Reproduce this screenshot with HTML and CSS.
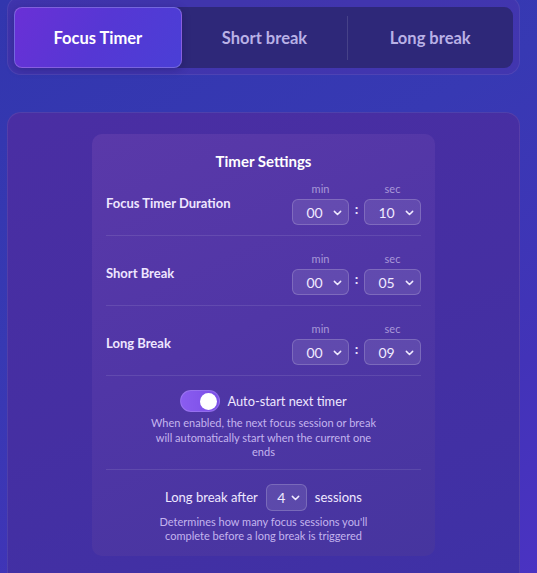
FILE: index.html
```html
<!DOCTYPE html>
<html lang="en">
<head>
<meta charset="utf-8">
<title>Timer Settings</title>
<link rel="stylesheet" href="styles.css">
</head>
<body>
<div class="page">
  <div class="tabs-wrap">
    <div class="tabs">
      <div class="tab active">Focus Timer</div>
      <div class="tab">Short break</div>
      <div class="tab divided">Long break</div>
    </div>
  </div>

  <div class="panel">
    <div class="card">
      <div class="card-title">Timer Settings</div>

      <div class="row first">
        <div class="row-label">Focus Timer Duration</div>
        <div class="time">
          <div class="unit">
            <div class="unit-label">min</div>
            <div class="select"><span class="val">00</span><svg class="chev" viewBox="0 0 10 6"><path d="M1.5 1.2 L5 4.6 L8.5 1.2"/></svg></div>
          </div>
          <div class="colon">:</div>
          <div class="unit">
            <div class="unit-label">sec</div>
            <div class="select"><span class="val">10</span><svg class="chev" viewBox="0 0 10 6"><path d="M1.5 1.2 L5 4.6 L8.5 1.2"/></svg></div>
          </div>
        </div>
      </div>

      <div class="row">
        <div class="row-label">Short Break</div>
        <div class="time">
          <div class="unit">
            <div class="unit-label">min</div>
            <div class="select"><span class="val">00</span><svg class="chev" viewBox="0 0 10 6"><path d="M1.5 1.2 L5 4.6 L8.5 1.2"/></svg></div>
          </div>
          <div class="colon">:</div>
          <div class="unit">
            <div class="unit-label">sec</div>
            <div class="select"><span class="val">05</span><svg class="chev" viewBox="0 0 10 6"><path d="M1.5 1.2 L5 4.6 L8.5 1.2"/></svg></div>
          </div>
        </div>
      </div>

      <div class="row">
        <div class="row-label">Long Break</div>
        <div class="time">
          <div class="unit">
            <div class="unit-label">min</div>
            <div class="select"><span class="val">00</span><svg class="chev" viewBox="0 0 10 6"><path d="M1.5 1.2 L5 4.6 L8.5 1.2"/></svg></div>
          </div>
          <div class="colon">:</div>
          <div class="unit">
            <div class="unit-label">sec</div>
            <div class="select"><span class="val">09</span><svg class="chev" viewBox="0 0 10 6"><path d="M1.5 1.2 L5 4.6 L8.5 1.2"/></svg></div>
          </div>
        </div>
      </div>

      <div class="section auto">
        <div class="toggle-line">
          <div class="toggle"><div class="knob"></div></div>
          <div class="toggle-label">Auto-start next timer</div>
        </div>
        <p class="desc auto-desc">When enabled, the next focus session or break will automatically start when the current one ends</p>
      </div>

      <div class="section sessions">
        <div class="sessions-line">
          <span>Long break after</span>
          <div class="select small"><span class="val">4</span><svg class="chev" viewBox="0 0 10 6"><path d="M1.5 1.2 L5 4.6 L8.5 1.2"/></svg></div>
          <span>sessions</span>
        </div>
        <p class="desc sessions-desc">Determines how many focus sessions you'll complete before a long break is triggered</p>
      </div>
    </div>
  </div>
</div>
</body>
</html>
```

FILE: styles.css
```css
* { box-sizing: border-box; }

html, body {
  margin: 0;
  padding: 0;
}

body {
  width: 537px;
  height: 573px;
  overflow: hidden;
  font-family: Lato, "Open Sans", "Liberation Sans", sans-serif;
  background: linear-gradient(150deg, #3236ae 0%, #3739b3 40%, #4233b8 75%, #4a33c2 100%);
  color: #fff;
}

.page {
  padding: 0 17px 0 7px;
}

.tabs-wrap {
  margin-top: -4px;
  padding: 10px 6px 6px 6px;
  border-radius: 14px;
  background: rgba(80, 50, 170, 0.45);
  border: 1px solid rgba(255, 255, 255, 0.07);
}

.tabs {
  display: flex;
  height: 61px;
  border-radius: 9px;
  background: #2e2879;
}

.tab {
  flex: 1;
  display: flex;
  align-items: center;
  justify-content: center;
  font-size: 16.5px;
  font-weight: 700;
  color: #b9b1e6;
  position: relative;
}

.tab.active {
  color: #fff;
  border-radius: 8px;
  background: linear-gradient(120deg, #6a30d6 0%, #5637d4 50%, #4a3fd6 100%);
  border: 1px solid rgba(255, 255, 255, 0.22);
  box-shadow: 0 2px 8px rgba(20, 10, 80, 0.3);
}

.tab.divided::before {
  content: "";
  position: absolute;
  left: 0;
  top: 9px;
  bottom: 8px;
  width: 1px;
  background: rgba(255, 255, 255, 0.12);
}

.panel {
  margin-top: 37px;
  height: 480px;
  padding: 21px 0 0;
  border-radius: 14px;
  background: linear-gradient(160deg, #4a2ea3 0%, #452fa2 50%, #3e31a6 100%);
  border: 1px solid rgba(255, 255, 255, 0.08);
  display: flex;
  justify-content: center;
  align-items: flex-start;
}

.card {
  width: 343px;
  padding: 17px 14px 12px;
  border-radius: 10px;
  background: linear-gradient(155deg, #5a39a9 0%, #5036a6 45%, #46359f 100%);
}

.card-title {
  text-align: center;
  font-size: 15px;
  font-weight: 700;
  line-height: 20px;
  color: #fff;
}

.row {
  display: flex;
  align-items: center;
  justify-content: space-between;
  padding: 15px 0 10px;
  border-bottom: 1px solid rgba(255, 255, 255, 0.1);
}

.row.first {
  padding-top: 10px;
}

.row-label {
  font-size: 13px;
  font-weight: 700;
  color: #eee6ff;
}

.time {
  display: flex;
  align-items: flex-end;
}

.unit {
  display: flex;
  flex-direction: column;
  align-items: center;
  gap: 2px;
}

.unit-label {
  font-size: 11px;
  line-height: 16px;
  color: #a898d8;
}

.colon {
  width: 15px;
  height: 26px;
  text-align: center;
  font-size: 14px;
  line-height: 20px;
  font-weight: 700;
  color: #e8e0ff;
}

.select {
  width: 57px;
  height: 26px;
  border-radius: 6px;
  background: rgba(255, 255, 255, 0.1);
  border: 1px solid rgba(255, 255, 255, 0.18);
  display: flex;
  align-items: center;
  justify-content: center;
  position: relative;
  padding-right: 12px;
}

.val {
  font-size: 14px;
  color: #f0eaff;
}

.chev {
  position: absolute;
  right: 6px;
  top: 10px;
  width: 9px;
  height: 6px;
  fill: none;
  stroke: #f0eaff;
  stroke-width: 1.7;
  stroke-linecap: round;
  stroke-linejoin: round;
}

.section {
  display: flex;
  flex-direction: column;
  align-items: center;
}

.auto {
  padding: 14px 0 9px;
  border-bottom: 1px solid rgba(255, 255, 255, 0.1);
}

.toggle-line {
  display: flex;
  align-items: center;
  gap: 7px;
}

.toggle {
  width: 40px;
  height: 22px;
  border-radius: 11px;
  background: linear-gradient(90deg, #8a5cf0 0%, #7a4ee6 100%);
  border: 1px solid rgba(255, 255, 255, 0.15);
  display: flex;
  align-items: center;
  justify-content: flex-end;
  padding-right: 2px;
}

.knob {
  width: 17px;
  height: 17px;
  border-radius: 50%;
  background: #fff;
}

.toggle-label {
  font-size: 12.8px;
  color: #efe8ff;
}

.desc {
  margin: 4px 0 0;
  text-align: center;
  font-size: 11px;
  line-height: 14.5px;
  color: #c4b4ee;
}

.auto-desc {
  width: 236px;
}

.sessions {
  padding: 14px 0 0;
}

.sessions-line {
  display: flex;
  align-items: center;
  gap: 8px;
  font-size: 13px;
  color: #efe8ff;
}

.select.small {
  width: 41px;
  height: 27px;
  padding-right: 10px;
}

.select.small .chev {
  right: 6px;
  top: 10px;
}

.sessions-desc {
  width: 230px;
}
```
